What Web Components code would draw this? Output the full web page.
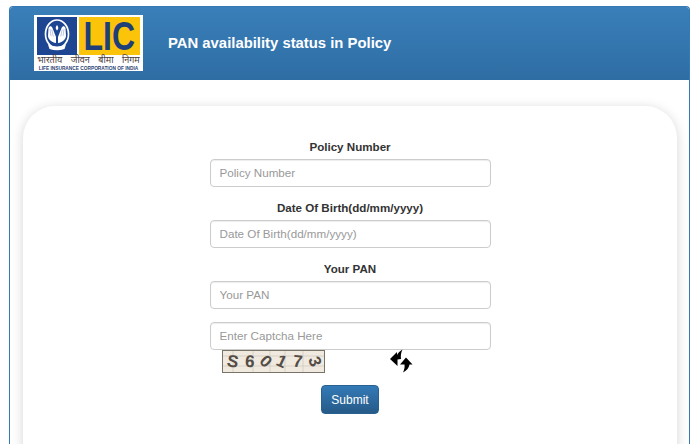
<!DOCTYPE html>
<html>
<head>
<meta charset="utf-8">
<style>
  html, body { margin: 0; height: 444px; overflow: hidden; background: #fff; }
  body { font-family: "Liberation Sans", Arial, sans-serif; color: #333; }
</style>
</head>
<body>
<status-panel>
  <lic-logo slot="logo"></lic-logo>
  <span slot="title">PAN availability status in Policy</span>
  <form-well>
    <form-field label="Policy Number" placeholder="Policy Number"></form-field>
    <form-field label="Date Of Birth(dd/mm/yyyy)" placeholder="Date Of Birth(dd/mm/yyyy)"></form-field>
    <form-field label="Your PAN" placeholder="Your PAN"></form-field>
    <form-field placeholder="Enter Captcha Here"></form-field>
    <captcha-row code="S60173"></captcha-row>
    <submit-button>Submit</submit-button>
  </form-well>
</status-panel>

<script>
class StatusPanel extends HTMLElement {
  constructor() {
    super();
    this.attachShadow({ mode: 'open' }).innerHTML = `
<style>
  :host { display: block; margin: 6px 6px 0 9px; height: 438px; box-sizing: border-box;
    border: 1px solid #337ab7; border-bottom: 0; border-radius: 4px 4px 0 0; background: #fff; overflow: hidden; }
  .head { height: 73px; display: flex; align-items: flex-start; gap: 25px; padding-left: 24px;
    background: linear-gradient(#3a7fb9, #2e6da4); color: #fff; font-size: 14.850px; font-weight: bold; }
  .head ::slotted(span) { margin-top: 28px; }
  .body { padding: 26px 12px 0 13px; }
</style>
<div class="head"><slot name="logo"></slot><slot name="title"></slot></div>
<div class="body"><slot></slot></div>`;
  }
}

class LicLogo extends HTMLElement {
  constructor() {
    super();
    this.attachShadow({ mode: 'open' }).innerHTML = `
<style>
  :host { display: block; width: 109px; height: 56px; margin-top: 8px; box-sizing: border-box; background: #fff; padding: 2px 3px 0; flex: none; }
  .top { display: flex; gap: 2px; height: 38px; }
  .emblem { width: 40px; background: #1d4592; display: flex; align-items: center; justify-content: center; }
  .name { width: 61px; background: #fcc30b; color: #1e3f78; font: bold 40px/38px "Liberation Sans", sans-serif;
    display: flex; justify-content: center; white-space: nowrap; }
  .name span { display: block; flex: none; transform: scaleX(.8); }
  .hi { font: 9px/11px "Liberation Sans", "Noto Sans", "DejaVu Sans", sans-serif; color: #4a3a3a; text-align: center; white-space: nowrap; height: 11px; word-spacing: 6px; }
  .en { font: bold 4.800px/5px "Liberation Sans", sans-serif; color: #2b3f73; text-align: center; white-space: nowrap; }
</style>
<div class="top">
  <div class="emblem">
    <svg width="40" height="38" viewBox="0 0 40 38">
      <ellipse cx="20" cy="17" rx="11.500" ry="14" fill="none" stroke="#fff" stroke-width="1.700"/>
      <path d="M11.500 11c1-2.500 3-2.500 4 0l3.500 9v6c-4-.5-7.500-3-8-7z" fill="#fff"/>
      <path d="M28.500 11c-1-2.500-3-2.500-4 0l-3.500 9v6c4-.5 7.500-3 8-7z" fill="#fff"/>
      <path d="M13 12l1 7M14.800 12.500l1.500 7M27 12l-1 7M25.200 12.500l-1.500 7" stroke="#8fa3cc" stroke-width=".6" fill="none"/>
      <path d="M20 8c1.500 2 2 3.500 0 5.500-2-2-1.500-3.500 0-5.500z" fill="#fff"/>
      <path d="M11 27.500q9 4 18 0l-1.500 4.500q-7.500 2.500-15 0z" fill="#fff"/>
    </svg>
  </div>
  <div class="name"><span>LIC</span></div>
</div>
<div class="hi">भारतीय जीवन बीमा निगम</div>
<div class="en">LIFE INSURANCE CORPORATION OF INDIA</div>`;
  }
}

class FormWell extends HTMLElement {
  constructor() {
    super();
    this.attachShadow({ mode: 'open' }).innerHTML = `
<style>
  :host { display: flex; flex-direction: column; align-items: center; box-sizing: border-box; height: 400px; padding-top: 33px;
    background: #fff; border-radius: 32px; box-shadow: 0 2px 12px rgba(0,0,0,.17); }
</style>
<slot></slot>`;
  }
}

class FormField extends HTMLElement {
  constructor() {
    super();
    const label = this.getAttribute('label');
    this.attachShadow({ mode: 'open' }).innerHTML = `
<style>
  :host { display: flex; flex-direction: column; align-items: center; width: 281px; margin-bottom: 13px; }
  label { font: bold 11.600px/16px "Liberation Sans", sans-serif; color: #333; margin-bottom: 4px; white-space: nowrap; }
  input { width: 100%; height: 28px; box-sizing: border-box; padding: 0 9px 2px; font: 11.650px "Liberation Sans", sans-serif; color: #555;
    background: #fff; border: 1px solid #ccc; border-radius: 4px; box-shadow: inset 0 1px 1px rgba(0,0,0,.075); outline: 0; }
  input::placeholder { color: #999; opacity: 1; }
</style>
${label ? `<label>${label}</label>` : ''}
<input type="text" placeholder="${this.getAttribute('placeholder')}">`;
  }
}

class CaptchaRow extends HTMLElement {
  constructor() {
    super();
    const tilt = [10, 4, 45, 25, 6, 70];
    const chars = [...this.getAttribute('code')]
      .map((c, i) => `<span style="transform:rotate(${tilt[i]}deg)">${c}</span>`).join('');
    this.attachShadow({ mode: 'open' }).innerHTML = `
<style>
  :host { display: flex; width: 256px; height: 23px; margin: -13px 0 12px -1px; gap: 64px; align-items: flex-start; }
  .img { position: relative; width: 103px; height: 23px; box-sizing: border-box; border: 1px solid #7a7468; background: #efe9df;
    display: flex; justify-content: space-around; align-items: center; padding: 0 1px;
    font: bold 17px/21px "Liberation Sans", sans-serif; color: #544d46; }
  .img span { display: inline-block; position: relative; }
  .noise { position: absolute; inset: 0; }
  svg.r { margin-top: -1px; flex: none; }
</style>
<div class="img">
  <svg class="noise" width="101" height="21" viewBox="0 0 101 21">
    <path d="M10 0v21M30 0v21M47 0v21M62 0v21M80 0v21M0 15h101M0 5h101" stroke="#cfc8bb" stroke-width=".7" fill="none"/>
  </svg>
  ${chars}
</div>
<svg class="r" width="24" height="24" viewBox="0 0 24 24">
  <path d="M1 10 8 3 8 6C9 4 11 2 13.500 .500 12 3.500 11.500 7 12 10L8.500 10.500 8.500 17Z" fill="#000"/>
  <path d="M17 8.500 23.500 15.500 20.500 15.500C20 18.500 18 21.500 14 23.500 15.500 20.500 15.800 18 15.500 15.500L11 15.500Z" fill="#000"/>
</svg>`;
  }
}

class SubmitButton extends HTMLElement {
  constructor() {
    super();
    this.attachShadow({ mode: 'open' }).innerHTML = `
<style>
  :host { display: block; }
  button { display: block; width: 58px; height: 29px; padding: 0; font: 12px "Liberation Sans", sans-serif; color: #fff;
    border: 1px solid #28618f; border-radius: 4px; background: linear-gradient(#337ab7, #265a88); }
</style>
<button type="button"><slot></slot></button>`;
  }
}

customElements.define('status-panel', StatusPanel);
customElements.define('lic-logo', LicLogo);
customElements.define('form-well', FormWell);
customElements.define('form-field', FormField);
customElements.define('captcha-row', CaptchaRow);
customElements.define('submit-button', SubmitButton);
</script>
</body>
</html>
